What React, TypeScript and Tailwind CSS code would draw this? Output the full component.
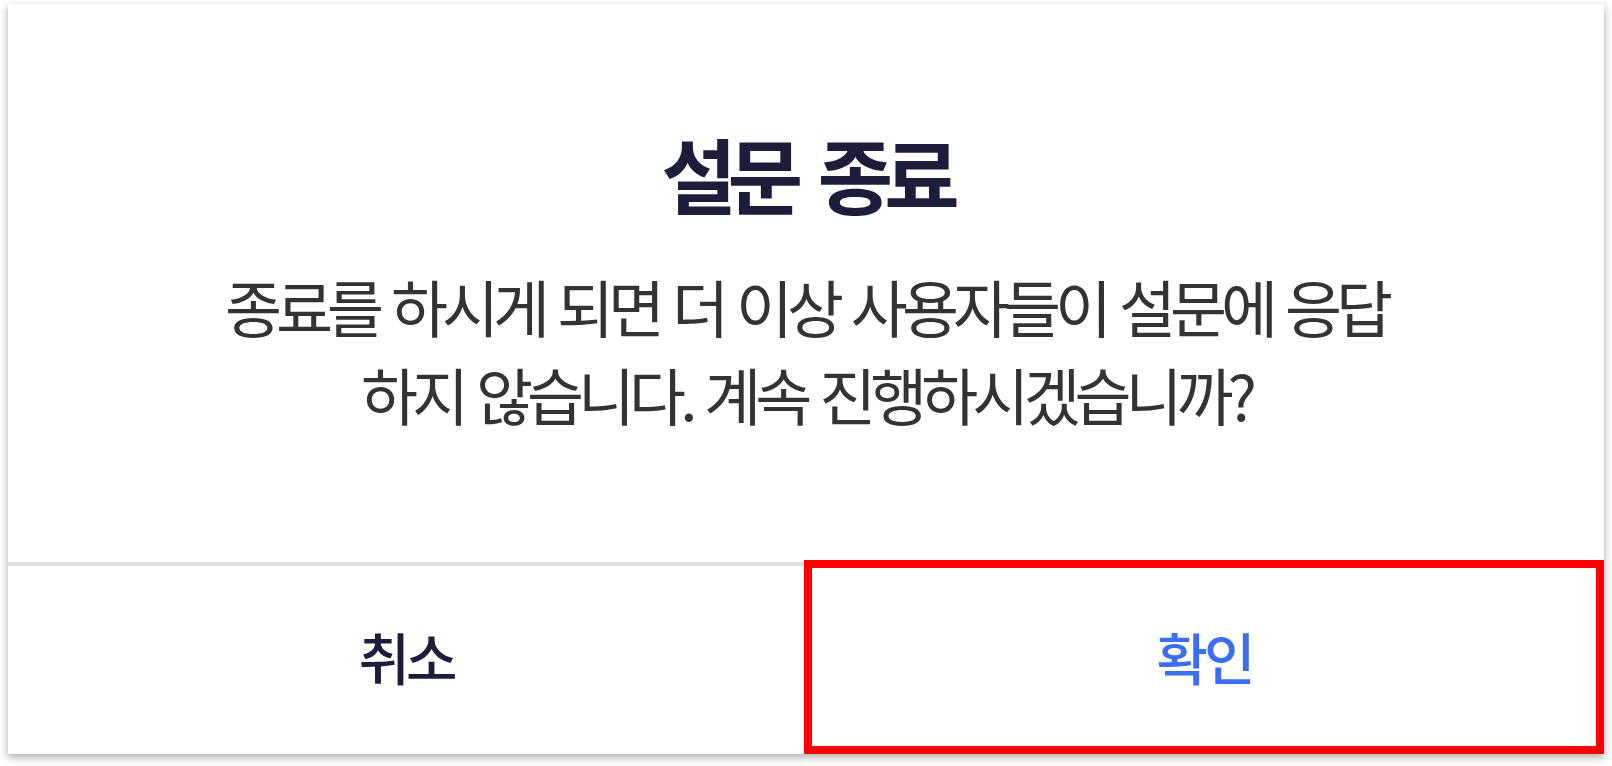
import React from 'react';

const font = "font-['Noto_Sans_CJK_KR','Noto_Sans',sans-serif]";

export default function App() {
  return (
    <div className={`min-h-[766px] w-[1612px] bg-white pl-[8px] pt-[4px] ${font}`}>
      <div className="relative flex h-[750px] w-[1596px] flex-col bg-white shadow-[0_3px_8px_rgba(0,0,0,0.35)]">
        {/* Message */}
        <div className="flex h-[558px] flex-col items-center pt-[124px]">
          <h2 className="text-[82px] font-bold leading-[90px] tracking-[-9px] [word-spacing:14px] text-[#1b1d3a]">설문 종료</h2>
          <p className="mt-[44px] text-center text-[62px] leading-[88px] tracking-[-6px] [word-spacing:5px] text-[#333333]">
            종료를 하시게 되면 더 이상 사용자들이 설문에 응답
            <br />
            하지 않습니다. 계속 진행하시겠습니까?
          </p>
        </div>

        {/* Actions */}
        <div className="flex flex-1 border-t-4 border-[#e0e0e0] pb-[8px]">
          <button className="flex w-[796px] items-center justify-center text-[56px] font-medium tracking-[-4px] text-[#1b1d3a]">
            취소
          </button>
          <button className="relative flex flex-1 items-center justify-center text-[56px] font-medium tracking-[-4px] text-[#3b6ef0]">
            확인
            <span className="pointer-events-none absolute -top-[6px] -bottom-[8px] left-0 right-0 border-8 border-[#ff0000]" />
          </button>
        </div>
      </div>
    </div>
  );
}
